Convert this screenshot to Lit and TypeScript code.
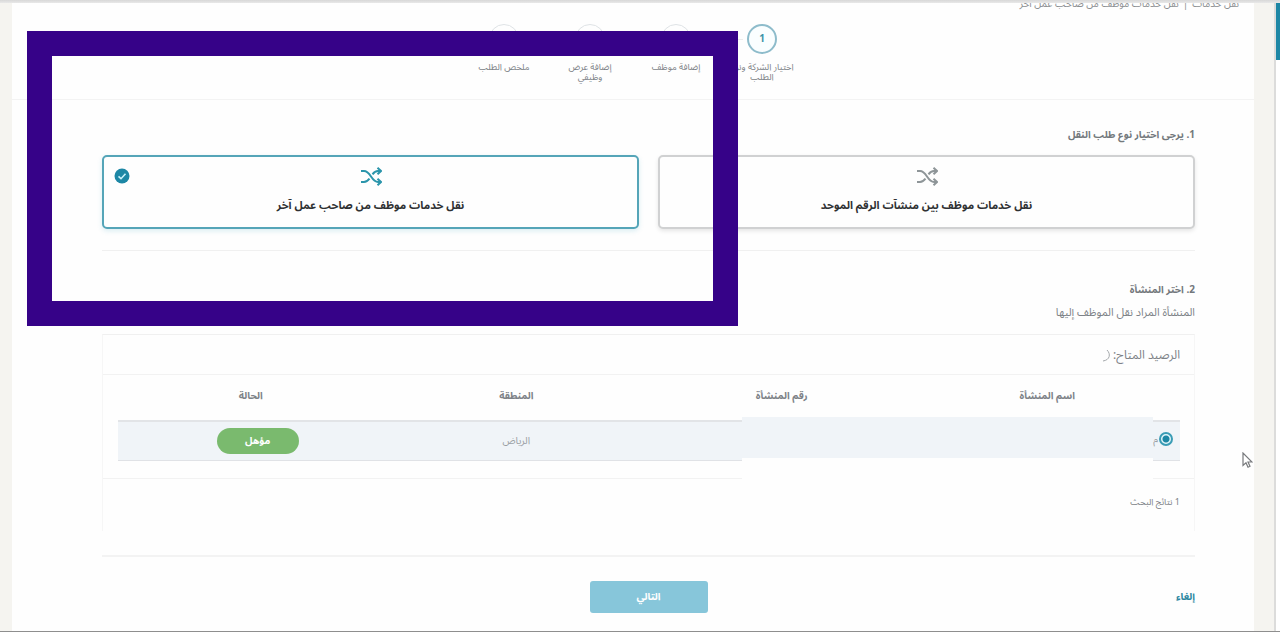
import { LitElement, html, css, svg } from "lit";
import { customElement, state } from "lit/decorators.js";

const shuffle = svg`<path d="M1 4h3c3 0 5 2.500 7 5.500s4 5.500 7 5.500h2M1 15h3c2.500 0 4-1.300 5.500-3.300M12.500 7.300C14 5.200 15.500 4 18 4h2M17.500 0.800 21 4l-3.500 3.200M17.500 11.800 21 15l-3.500 3.200" />`;

@customElement("app-root")
export class AppRoot extends LitElement {
  @state() private kind = "other";

  private steps = ["اختيار الشركة ونوع الطلب", "إضافة موظف", "إضافة عرض وظيفي", "ملخص الطلب"];
  private kinds = [
    { id: "unified", label: "نقل خدمات موظف بين منشآت الرقم الموحد" },
    { id: "other", label: "نقل خدمات موظف من صاحب عمل آخر" },
  ];

  static styles = css`
    :host {
      display: block;
      position: relative;
      min-height: 100vh;
      box-sizing: border-box;
      padding: 0 26px 0 12px;
      overflow: hidden;
      background: #f5f4f0;
      color: #7d8287;
      font: 10px/16px "Noto Sans Arabic", "DejaVu Sans", sans-serif;
      direction: rtl;
    }
    * { box-sizing: border-box; }
    h2, p, ol { margin: 0; padding: 0; font-weight: 400; }
    .topbar {
      position: absolute;
      inset: 0 0 auto 0;
      height: 3px;
      background: linear-gradient(#d8d8d8, #e8e8e8);
    }
    .bottombar {
      position: absolute;
      inset: auto 0 0 0;
      height: 1px;
      background: #8e8e8e;
    }
    .scroll {
      position: absolute;
      inset: 0 0 0 auto;
      width: 6px;
      border-left: 2px solid #dcdcdb;
      background: #fff;
    }
    .thumb { height: 60px; background: #1d87a5; }
    .sheet { min-height: 100vh; background: #fefefe; }
    .crumbs {
      display: flex;
      gap: 4px;
      padding: 0 15px;
      line-height: 8px;
      color: #8c8f92;
    }
    .crumbs a { color: inherit; text-decoration: none; }
    .steps {
      display: flex;
      justify-content: center;
      height: 92px;
      padding-top: 16px;
      border-bottom: 1px solid #f3f3f3;
      list-style: none;
      font-size: 9px;
      line-height: 10px;
      text-align: center;
    }
    .step {
      position: relative;
      display: flex;
      flex-direction: column;
      align-items: center;
      gap: 9px;
      width: 86px;
      padding: 0 12px;
    }
    .step:first-child { padding: 0 8px; }
    .step + .step::before {
      content: "";
      position: absolute;
      top: 15px;
      right: -24px;
      width: 48px;
      height: 1px;
      background: #ececec;
    }
    .dot {
      display: grid;
      place-items: center;
      width: 30px;
      height: 30px;
      border: 1px solid #dfe3e6;
      border-radius: 50%;
      font-size: 10px;
      color: #a9aeb2;
      flex: none;
    }
    .step:first-child .dot {
      border: 2px solid #8ebccb;
      color: #3f92a8;
      background: #fafeff;
      font-weight: 700;
    }
    .body { padding: 27px 59px 0 90px; }
    h2 { font-size: 10px; font-weight: 700; color: #73787c; }
    .kinds {
      display: grid;
      grid-template-columns: 1fr 1fr;
      gap: 19px;
      padding: 12px 0 21px;
      border-bottom: 1px solid #f0f0f0;
    }
    .kind {
      position: relative;
      display: flex;
      flex-direction: column;
      align-items: center;
      gap: 12px;
      height: 74px;
      padding: 10px;
      border: 2px solid #d0d1d2;
      border-radius: 5px;
      background: #fefefe;
      box-shadow: 0 2px 4px #0000001a;
      color: #2f3133;
      font: inherit;
      font-size: 11px;
      font-weight: 700;
    }
    .kind.on { border-color: #55a5b8; box-shadow: 0 2px 5px #2a9ab52b; }
    .shuffle {
      width: 22px;
      height: 19px;
      fill: none;
      stroke: #8e9598;
      stroke-width: 2;
      flex: none;
    }
    .on .shuffle { stroke: #2b95ab; }
    .check { position: absolute; left: 10px; top: 11px; width: 16px; height: 16px; }
    .pick { display: grid; gap: 7px; padding: 31px 0 13px; font-size: 11px; }
    .card { border: 1px solid #f6f6f6; border-top-color: #f0f0f0; border-bottom: 0; height: 197px; }
    .credit {
      display: flex;
      align-items: center;
      gap: 2px;
      height: 39px;
      padding: 2px 14px 0;
      font-size: 12px;
    }
    .spin { width: 9px; height: 14px; fill: none; stroke: #a4a8ab; stroke-width: 1; }
    .box {
      position: relative;
      padding: 0 14px 17px 15px;
      border-top: 1px solid #f2f2f2;
      border-bottom: 1px solid #f2f2f2;
    }
    table { width: 100%; border-collapse: collapse; table-layout: fixed; }
    th { height: 46px; padding: 0 0 4px; font-size: 10px; }
    td {
      height: 39px;
      padding: 0;
      border-top: 2px solid #e2e4e7;
      border-bottom: 1px solid #e0e2e6;
      background: #f0f4f8;
      text-align: center;
      font-size: 10px;
      color: #9a9fa4;
    }
    .name { display: flex; align-items: center; gap: 1px; padding: 0 7px 4px; }
    .name input {
      appearance: none;
      width: 14px;
      height: 14px;
      margin: 0;
      border: 2px solid #3a9cb5;
      border-radius: 50%;
      background: radial-gradient(circle, #1d87a5 3px, #e2f5fa 4px);
    }
    .badge {
      display: inline-block;
      width: 82px;
      margin-left: 14px;
      border-radius: 13px;
      background: #7aba6e;
      color: #fff;
      font-weight: 700;
      line-height: 26px;
      vertical-align: middle;
    }
    .mask {
      position: absolute;
      top: 42px;
      bottom: -2px;
      right: 41px;
      left: calc(58.500% + 1px);
      border-bottom: 22px solid #fefefe;
      background: #f0f4f8;
    }
    .count { padding: 16px 14px; font-size: 9px; }
    .actions {
      display: grid;
      grid-template-columns: 1fr auto 1fr;
      align-items: center;
      margin-top: 24px;
      padding-top: 24px;
      border-top: 2px solid #f3f3f3;
    }
    .cancel { color: #2b87a0; font-weight: 700; text-decoration: none; }
    .next {
      width: 118px;
      height: 32px;
      border: 0;
      border-radius: 3px;
      background: #87c6da;
      color: #fff;
      font: inherit;
      font-weight: 700;
    }
    .focus {
      position: absolute;
      top: 31px;
      left: 27px;
      width: 711px;
      height: 295px;
      border: 25px solid #360288;
      pointer-events: none;
    }
    .cursor { position: absolute; left: 1242px; top: 452px; width: 11px; height: 17px; }
  `;

  render() {
    return html`
      <main class="sheet">
        <nav class="crumbs"><a href="#services">نقل خدمات</a><span>|</span><span>نقل خدمات موظف من صاحب عمل آخر</span></nav>
        <ol class="steps">
          ${this.steps.map((s, i) => html`<li class="step"><span class="dot">${i + 1}</span><span>${s}</span></li>`)}
        </ol>
        <div class="body">
          <h2>1. يرجى اختيار نوع طلب النقل</h2>
          <div class="kinds">
            ${this.kinds.map((k) => html`
              <button class="kind ${k.id === this.kind ? "on" : ""}" aria-pressed=${k.id === this.kind} @click=${() => (this.kind = k.id)}>
                <svg class="shuffle" viewBox="0 0 22 19">${shuffle}</svg>
                <span>${k.label}</span>
                ${k.id === this.kind
                  ? html`<svg class="check" viewBox="0 0 16 16"><circle cx="8" cy="8" r="7.500" fill="#1d87a5" /><path d="m4.500 8.300 2.500 2.400 4.500-4.900" fill="none" stroke="#c9f1fa" stroke-width="1.600" /></svg>`
                  : ""}
              </button>`)}
          </div>
          <div class="pick">
            <h2>2. اختر المنشأة</h2>
            <p>المنشأة المراد نقل الموظف إليها</p>
          </div>
          <section class="card">
            <div class="credit"><span>الرصيد المتاح:</span><svg class="spin" viewBox="0 0 9 14"><path d="M5 1c4 4 3 10-4 11" /></svg></div>
            <div class="box">
              <table>
                <thead><tr><th>اسم المنشأة</th><th>رقم المنشأة</th><th>المنطقة</th><th>الحالة</th></tr></thead>
                <tbody><tr>
                  <td><label class="name"><input type="radio" name="firm" checked />م</label></td>
                  <td></td>
                  <td>الرياض</td>
                  <td><span class="badge">مؤهل</span></td>
                </tr></tbody>
              </table>
              <div class="mask"></div>
            </div>
            <p class="count">1 نتائج البحث</p>
          </section>
          <div class="actions">
            <a class="cancel" href="#cancel">إلغاء</a>
            <button class="next">التالي</button>
          </div>
        </div>
      </main>
      <div class="scroll"><div class="thumb"></div></div>
      <div class="topbar"></div>
      <div class="bottombar"></div>
      <div class="focus"></div>
      <svg class="cursor" viewBox="0 0 11 17"><path d="M1 1v12.500l3-2.700 2 4.400 2-1-2-4.200h4z" fill="#fff" stroke="#77797c" stroke-width="1.200" /></svg>
    `;
  }
}
